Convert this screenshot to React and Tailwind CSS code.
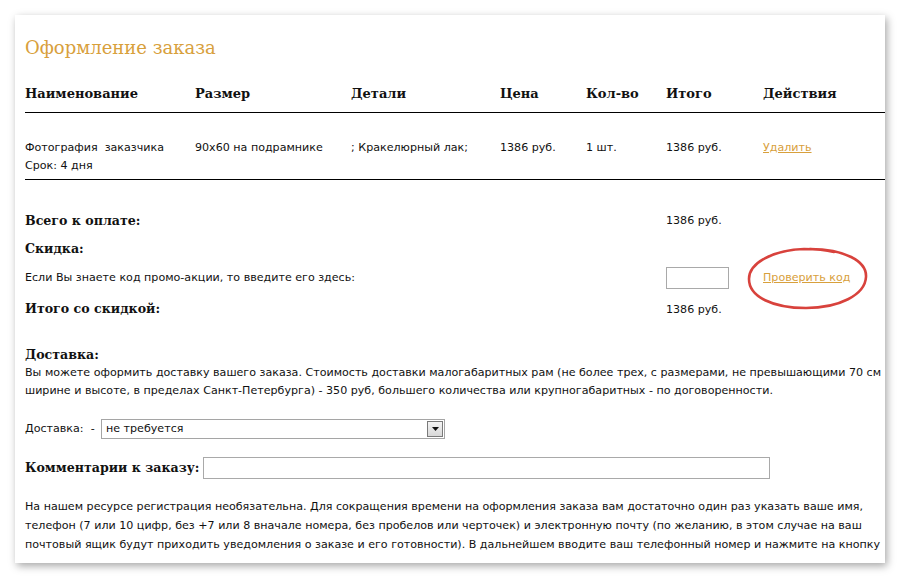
import React from 'react';

const serif = { fontFamily: '"DejaVu Serif", Georgia, serif' };

const columns = [
  { label: 'Наименование', w: 'w-[170px]' },
  { label: 'Размер', w: 'w-[156px]' },
  { label: 'Детали', w: 'w-[149px]' },
  { label: 'Цена', w: 'w-[86px]' },
  { label: 'Кол-во', w: 'w-[80px]' },
  { label: 'Итого', w: 'w-[97px]' },
  { label: 'Действия', w: 'w-[120px]' },
];

function PromoCircle() {
  return (
    <svg className="absolute left-[731px] top-[231px]" width="124" height="66" viewBox="0 0 124 66" fill="none">
      <path
        d="M64 3 C 98 3, 121 15, 120 31 C 119 49, 93 62, 60 62 C 27 62, 3 51, 3 33 C 3 17, 27 4, 58 3 C 70 3, 80 4, 88 6"
        stroke="#d8423c"
        strokeWidth="2.6"
        strokeLinecap="round"
      />
    </svg>
  );
}

export default function App() {
  return (
    <div className="w-[900px] h-[580px] bg-white pt-[15px] pl-[15px]">
      <div
        className="relative w-[870px] h-[548px] bg-white overflow-hidden shadow-[2px_3px_8px_rgba(0,0,0,0.35)] text-[11.1px] text-[#111]"
        style={{ fontFamily: '"DejaVu Sans", Tahoma, sans-serif' }}
      >
        <div className="pl-[10px]">
          <h1 className="pt-[21px] h-[46px] text-[18px] leading-[24px] text-[#d8a03c]" style={serif}>
            Оформление заказа
          </h1>

          <div className="flex items-center h-[51px] pt-[14px] text-[13px] font-bold" style={serif}>
            {columns.map((c) => (
              <div key={c.label} className={`${c.w} shrink-0`}>{c.label}</div>
            ))}
          </div>
          <div className="h-px bg-black w-[900px]" />

          <div className="flex pt-[26px] pb-[4px] leading-[18px]">
            <div className="w-[170px] shrink-0">
              <div className="whitespace-pre">Фотография  заказчика</div>
              <div>Срок: 4 дня</div>
            </div>
            <div className="w-[156px] shrink-0">90x60 на подрамнике</div>
            <div className="w-[149px] shrink-0">; Кракелюрный лак;</div>
            <div className="w-[86px] shrink-0">1386 руб.</div>
            <div className="w-[80px] shrink-0">1 шт.</div>
            <div className="w-[97px] shrink-0">1386 руб.</div>
            <div className="w-[120px] shrink-0">
              <a className="text-[#d8a03c] underline">Удалить</a>
            </div>
          </div>
          <div className="h-px bg-black w-[900px]" />

          <div className="mt-[27px]">
            <div className="flex items-center h-[28px]">
              <div className="w-[641px] shrink-0 text-[12.6px] font-bold" style={serif}>Всего к оплате:</div>
              <div>1386 руб.</div>
            </div>
            <div className="flex items-center h-[28px]">
              <div className="text-[12.6px] font-bold" style={serif}>Скидка:</div>
            </div>
            <div className="flex items-center h-[30px]">
              <div className="w-[641px] shrink-0">Если Вы знаете код промо-акции, то введите его здесь:</div>
              <input className="w-[63px] h-[22px] border border-[#a9a9a9] shrink-0" />
              <a className="ml-[34px] text-[#d8a03c] underline">Проверить код</a>
            </div>
            <div className="flex items-center h-[32px]">
              <div className="w-[641px] shrink-0 text-[12.6px] font-bold" style={serif}>Итого со скидкой:</div>
              <div className="pt-[2px]">1386 руб.</div>
            </div>
          </div>

          <div className="mt-[21px] h-[18px] leading-[18px] text-[12.6px] font-bold" style={serif}>Доставка:</div>
          <div className="leading-[18px] whitespace-nowrap">
            <div>Вы можете оформить доставку вашего заказа. Стоимость доставки малогабаритных рам (не более трех, с размерами, не превышающими 70 см</div>
            <div>ширине и высоте, в пределах Санкт-Петербурга) - 350 руб, большего количества или крупногабаритных - по договоренности.</div>
          </div>

          <div className="mt-[19px] flex items-center h-[20px]">
            <span className="w-[76px] shrink-0 whitespace-pre">Доставка:  -</span>
            <div className="w-[344px] h-[20px] border border-[#a5a5a5] flex items-center justify-between pl-[4px] pr-[1px]">
              <span>не требуется</span>
              <span className="w-[16px] h-[16px] border border-[#7a7a7a] bg-gradient-to-b from-[#f4f4f4] to-[#d8d8d8] flex items-center justify-center">
                <svg width="7" height="4" viewBox="0 0 7 4"><path d="M0 0h7L3.5 4z" fill="#111" /></svg>
              </span>
            </div>
          </div>

          <div className="mt-[18px] flex items-center h-[22px]">
            <span className="w-[178px] shrink-0 whitespace-nowrap text-[12.6px] font-bold" style={serif}>Комментарии к заказу:</span>
            <input className="w-[567px] h-[22px] border border-[#a9a9a9]" />
          </div>

          <div className="mt-[18px] leading-[19px] whitespace-nowrap">
            <div>На нашем ресурсе регистрация необязательна. Для сокращения времени на оформления заказа вам достаточно один раз указать ваше имя,</div>
            <div>телефон (7 или 10 цифр, без +7 или 8 вначале номера, без пробелов или черточек) и электронную почту (по желанию, в этом случае на ваш</div>
            <div>почтовый ящик будут приходить уведомления о заказе и его готовности). В дальнейшем вводите ваш телефонный номер и нажмите на кнопку</div>
          </div>
        </div>
        <PromoCircle />
      </div>
    </div>
  );
}
